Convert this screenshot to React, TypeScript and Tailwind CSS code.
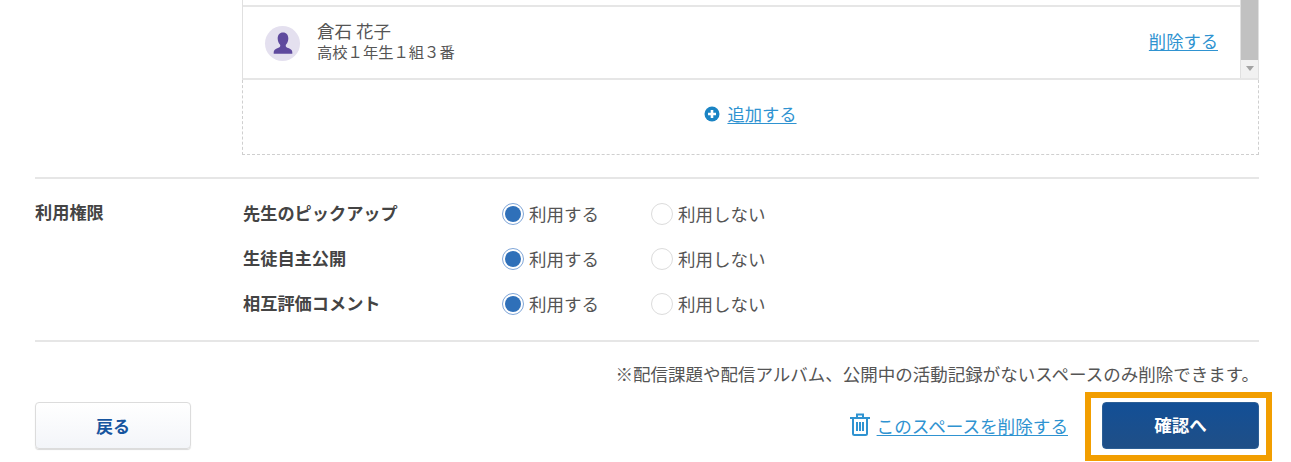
import React from "react";

const font = { fontFamily: '"Noto Sans CJK JP", "Liberation Sans", sans-serif' };

const permissions = ["先生のピックアップ", "生徒自主公開", "相互評価コメント"];

function Radio({ checked, label }: { checked?: boolean; label: string }) {
  return (
    <label className="flex items-center">
      {checked ? (
        <span className="flex h-[22px] w-[22px] items-center justify-center rounded-full border border-[#7fa6d8] bg-white">
          <span className="h-[16px] w-[16px] rounded-full bg-[#2f70b9]"></span>
        </span>
      ) : (
        <span className="h-[22px] w-[22px] rounded-full border border-[#dcdcdc] bg-white"></span>
      )}
      <span className="ml-[5px] text-[17.500px] leading-[22px] text-[#555]">{label}</span>
    </label>
  );
}

function App() {
  return (
    <div
      className="h-[462px] w-[1291px] overflow-hidden bg-white pl-[35px] pr-[32px]"
      style={font}>
      <div className="ml-[207px]">
        <div className="flex h-[80px] border-x border-b-2 border-x-[#e0e0e0] border-b-[#e6e6e6]">
          <div className="flex-1 pt-[5px]">
            <div className="flex h-[75px] items-center border-t-2 border-[#e6e6e6] pl-[22px] pr-[22px]">
              <div className="flex h-[35px] w-[35px] items-center justify-center rounded-full bg-[#e4e0ef]">
                <svg viewBox="4 2.500 16 19" className="h-[23px] w-[24px]">
                  <path
                    fill="#5f4a9e"
                    d="M12 3c-2.900 0-4.400 2.200-4.400 4.900 0 2.100.8 4 2 5.100.3.8.1 1.600-.5 2-1.600.9-4.100 1.300-4.600 3.200-.2.7-.2 1.500-.2 2.300h15.400c0-.8 0-1.600-.2-2.300-.5-1.900-3-2.300-4.600-3.200-.6-.4-.8-1.200-.5-2 1.200-1.100 2-3 2-5.100C16.400 5.200 14.900 3 12 3z"
                  />
                </svg>
              </div>
              <div className="-mt-[5px] ml-[17px] flex-1 text-[#555]">
                <div className="text-[17.500px] leading-[20px]">倉石 花子</div>
                <div className="text-[15.300px] leading-[20px]">高校１年生１組３番</div>
              </div>
              <a className="-mt-[5px] text-[17.300px] leading-[24px] text-[#2f93d1] underline underline-offset-2">
                削除する
              </a>
            </div>
          </div>
          <div className="relative w-[18px] border-l border-[#e0e0e0] bg-[#f1f1f1]">
            <div className="h-[60px] bg-[#c1c1c1]"></div>
            <div className="absolute left-[5px] top-[66px] h-0 w-0 border-x-[4px] border-t-[5px] border-x-transparent border-t-[#a3a3a3]"></div>
          </div>
        </div>
        <div className="flex h-[75px] items-center justify-center border-x border-b border-dashed border-[#cfcfcf] pb-[6px]">
          <svg viewBox="0 0 16 16" className="mr-[7px] h-[16px] w-[16px]">
            <circle cx="8" cy="8" r="7.500" fill="#1b84c4" />
            <path d="M8 4v8M4 8h8" stroke="#fff" strokeWidth="2.600" />
          </svg>
          <a className="text-[17.300px] leading-[24px] text-[#2f93d1] underline underline-offset-2">
            追加する
          </a>
        </div>
      </div>

      <div className="mt-[22px] flex h-[165px] border-y-2 border-[#e6e6e6] pt-[14px]">
        <div className="w-[208px] pt-[8px] text-[17.200px] font-bold leading-[22px] text-[#444]">
          利用権限
        </div>
        <div className="flex flex-col gap-[23px] pt-[10px]">
          {permissions.map((name) => (
            <div key={name} className="flex h-[22px] items-center">
              <div className="-mt-[3px] w-[259px] text-[17.200px] font-bold leading-[22px] text-[#444]">
                {name}
              </div>
              <div className="w-[149px]">
                <Radio checked label="利用する" />
              </div>
              <Radio label="利用しない" />
            </div>
          ))}
        </div>
      </div>

      <p className="mt-[20px] text-right text-[17.500px] leading-[24px] text-[#555]">
        ※配信課題や配信アルバム、公開中の活動記録がないスペースのみ削除できます。
      </p>

      <div className="mt-[16px] flex items-center justify-between">
        <button className="h-[47px] w-[156px] rounded-[4px] border border-[#dcdcdc] bg-gradient-to-b from-white to-[#f3f5f9] text-[17px] font-bold text-[#17559f] shadow-[0_1px_1px_rgba(0,0,0,0.15)]">
          戻る
        </button>
        <div className="flex items-center">
          <svg
            viewBox="0 0 20 23"
            fill="none"
            stroke="#2f93d1"
            strokeWidth="2"
            className="-mt-[3px] mr-[7px] h-[23px] w-[20px]">
            <path d="M0 5h20M7 5V1.500h6V5M3 5v15.500a1.500 1.500 0 0 0 1.500 1.500h11a1.500 1.500 0 0 0 1.500-1.500V5M7 9v9M10 9v9M13 9v9" />
          </svg>
          <a className="text-[17.600px] leading-[24px] text-[#2f93d1] underline underline-offset-2">
            このスペースを削除する
          </a>
          <div className="relative ml-[34px]">
            <button className="block h-[47px] w-[157px] rounded-[4px] border border-[#2d5f95] bg-gradient-to-b from-[#124f96] to-[#1f4f87] text-[17.500px] font-bold text-white">
              確認へ
            </button>
            <div className="absolute -bottom-[12px] -left-[17px] -right-[13px] -top-[10px] border-[6px] border-[#f29e00]"></div>
          </div>
        </div>
      </div>
    </div>
  );
}

export default App;
